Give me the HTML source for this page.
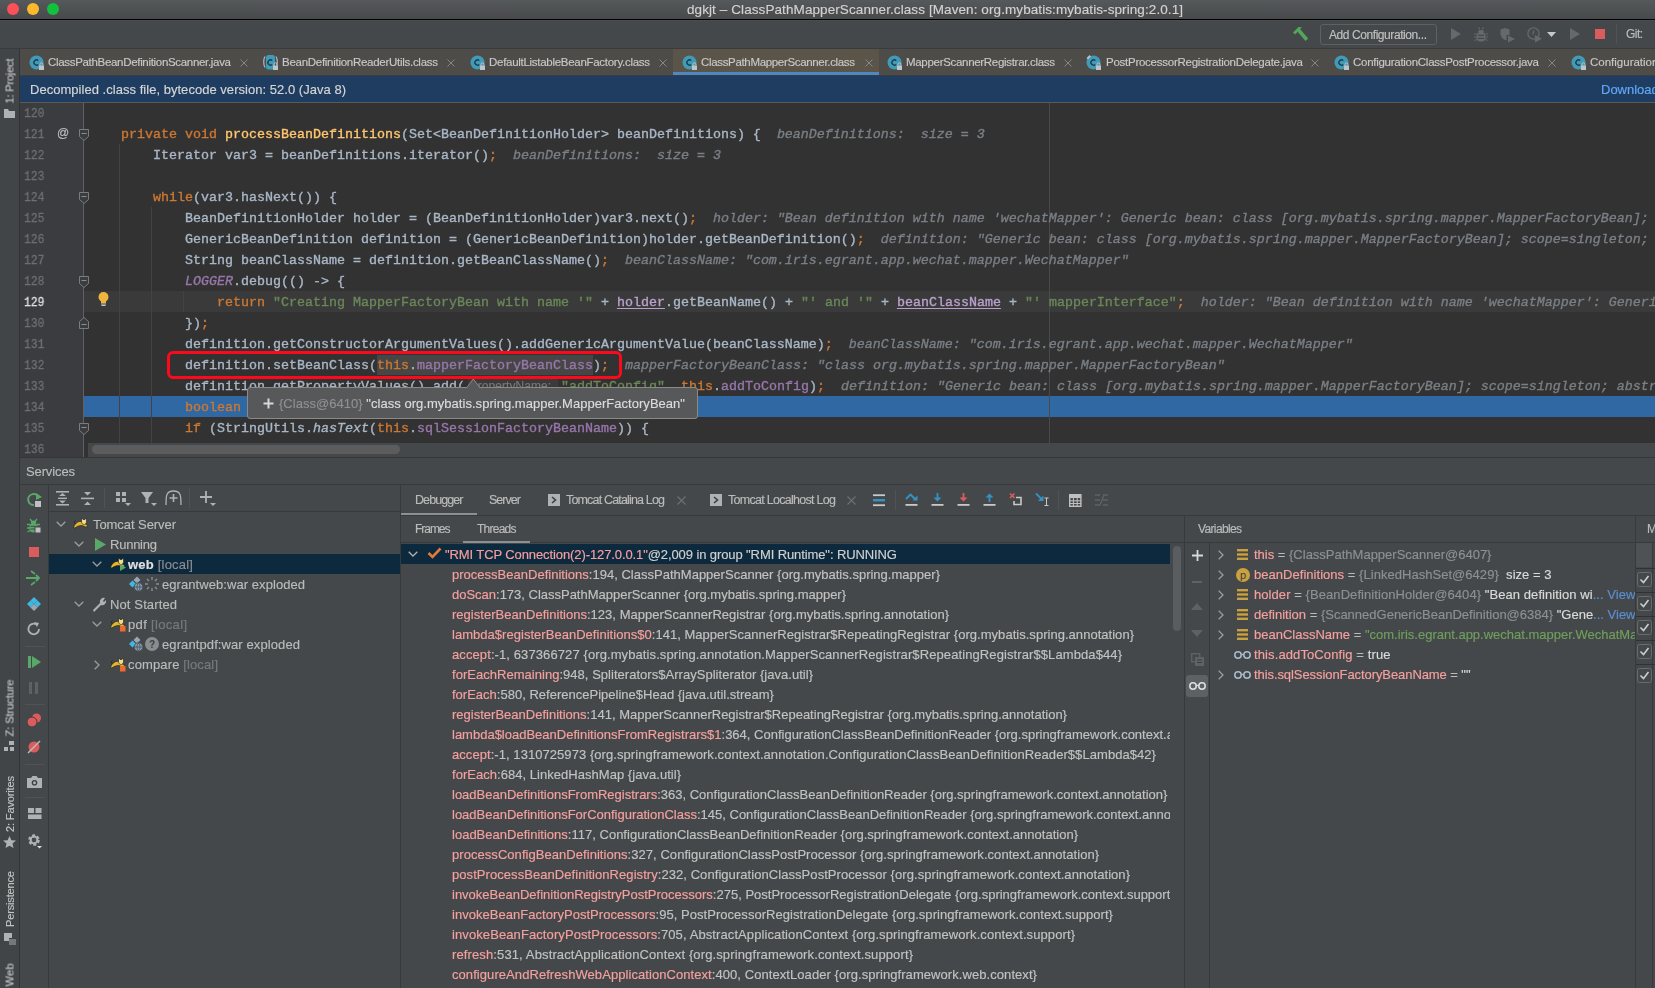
<!DOCTYPE html>
<html><head><meta charset="utf-8"><title>IntelliJ</title>
<style>
html,body{margin:0;padding:0;}
body{width:1655px;height:988px;overflow:hidden;position:relative;background:#45484a;font-family:'Liberation Sans', sans-serif;-webkit-font-smoothing:antialiased;}
body div{position:absolute;}
body div span{position:static;}
</style></head><body>
<div style="left:0;top:0;width:1655px;height:19px;background:linear-gradient(#56595b,#47494b)"></div>
<div style="left:0px;top:19px;width:1655px;height:1px;background:#000000;"></div>
<svg style="position:absolute;left:7px;top:3px;" width="12" height="12" viewBox="0 0 12 12"><circle cx="6" cy="6" r="6" fill="#fd4f57"/></svg>
<svg style="position:absolute;left:27px;top:3px;" width="12" height="12" viewBox="0 0 12 12"><circle cx="6" cy="6" r="6" fill="#fdb82c"/></svg>
<svg style="position:absolute;left:47px;top:3px;" width="12" height="12" viewBox="0 0 12 12"><circle cx="6" cy="6" r="6" fill="#12c13d"/></svg>
<div style="left:687.00px;top:0.30px;white-space:pre;will-change:transform;font-family:'Liberation Sans', sans-serif;font-size:13.5px;line-height:20px;-webkit-text-stroke-width:0.15px;letter-spacing:0.088px;color:#d2d2d2;font-weight:normal;font-style:normal;">dgkjt – ClassPathMapperScanner.class [Maven: org.mybatis:mybatis-spring:2.0.1]</div>
<div style="left:0px;top:20px;width:1655px;height:28px;background:#45484a;"></div>
<div style="left:0px;top:48px;width:1655px;height:1px;background:#393b3d;"></div>
<div style="left:0px;top:20px;width:1655px;height:1px;background:#4b4e50;"></div>
<svg style="position:absolute;left:1291px;top:26px;" width="18" height="16" viewBox="0 0 18 16"><path d="M2 6.4 L7.6 1.1 L10.9 1.2 L8.1 4.3 L4.2 8.4 Z" fill="#52a65c"/><path d="M6 5 L8.6 2.6 L17.2 12.6 L14.5 15 Z" fill="#52a65c"/></svg>
<div style="left:1320px;top:24px;width:115px;height:19px;border:1px solid #5e6062;border-radius:3px;"></div>
<div style="left:1329.00px;top:24.60px;white-space:pre;will-change:transform;font-family:'Liberation Sans', sans-serif;font-size:12px;line-height:20px;-webkit-text-stroke-width:0.15px;letter-spacing:-0.425px;color:#c0c0c0;font-weight:normal;font-style:normal;">Add Configuration...</div>
<svg style="position:absolute;left:1450px;top:28px;" width="12" height="12" viewBox="0 0 12 12"><path d="M1 0 L11 6 L1 12 Z" fill="#66686a"/></svg>
<svg style="position:absolute;left:1474px;top:27px;" width="14" height="15" viewBox="0 0 14 15"><path d="M4.5 0.5 L6 3 M9.5 0.5 L8 3" stroke="#66686a" stroke-width="1.2"/><ellipse cx="7" cy="4.5" rx="3" ry="2"/><rect x="2.5" y="5" width="9" height="9.5" rx="4" fill="#66686a"/><ellipse cx="7" cy="4.5" rx="3" ry="2" fill="#66686a"/><path d="M0 7 H2.5 M11.5 7 H14 M0 10 H2.5 M11.5 10 H14 M0.5 13.5 L2.5 12.5 M13.5 13.5 L11.5 12.5" stroke="#66686a" stroke-width="1.2"/><path d="M4 8.3 H10 M4 11.3 H10" stroke="#45484a" stroke-width="1.2"/></svg>
<svg style="position:absolute;left:1500px;top:28px;" width="16" height="15" viewBox="0 0 16 15"><path d="M0.5 1.5 L5 0 L9.5 1.5 L9.5 7 L6.5 7 L6.5 12.5 C3 11.5 0.5 9 0.5 5 Z" fill="#66686a"/><path d="M8 7.5 L15 11 L8 14.5 Z" fill="#66686a"/></svg>
<svg style="position:absolute;left:1527px;top:27px;" width="16" height="16" viewBox="0 0 16 16"><circle cx="6.5" cy="6.5" r="5.6" fill="none" stroke="#66686a" stroke-width="1.3"/><path d="M6.8 3.5 L5.8 7.5" stroke="#66686a" stroke-width="1.2"/><path d="M8 8 L15 11.7 L8 15.4 Z" fill="#66686a"/></svg>
<svg style="position:absolute;left:1547px;top:32px;" width="9" height="6" viewBox="0 0 9 6"><path d="M0 0 L9 0 L4.5 5 Z" fill="#c8c8c8"/></svg>
<svg style="position:absolute;left:1570px;top:28px;" width="11" height="12" viewBox="0 0 11 12"><path d="M0 0 L10 6 L0 12 Z" fill="#66686a"/></svg>
<div style="left:1595px;top:29px;width:10px;height:10px;background:#db5c5c;"></div>
<div style="left:1616px;top:24px;width:1px;height:20px;background:#505254;"></div>
<div style="left:1626.00px;top:24.00px;white-space:pre;will-change:transform;font-family:'Liberation Sans', sans-serif;font-size:12px;line-height:20px;-webkit-text-stroke-width:0.15px;letter-spacing:-0.557px;color:#bbbbbb;font-weight:normal;font-style:normal;">Git:</div>
<div style="left:0px;top:49px;width:19px;height:939px;background:#424547;"></div>
<div style="left:19px;top:49px;width:1px;height:939px;background:#323436;"></div>
<div style="left:-13.00px;top:73.50px;width:49.0px;white-space:pre;font-family:'Liberation Sans', sans-serif;font-size:11px;line-height:14px;-webkit-text-stroke-width:0.15px;letter-spacing:-0.163px;color:#c6c6c6;font-weight:normal;font-style:normal;transform:rotate(-90deg);will-change:transform;transform-origin:22.50px 7.0px;">1: Project</div>
<svg style="position:absolute;left:4px;top:108px;" width="12" height="11" viewBox="0 0 12 11"><path d="M0 1 L4 1 L5 3 L11 3 L11 10 L0 10 Z" fill="#afb1b3"/></svg>
<div style="left:-19.00px;top:700.50px;width:61.0px;white-space:pre;font-family:'Liberation Sans', sans-serif;font-size:11px;line-height:14px;-webkit-text-stroke-width:0.15px;letter-spacing:-0.043px;color:#c6c6c6;font-weight:normal;font-style:normal;transform:rotate(-90deg);will-change:transform;transform-origin:28.50px 7.0px;">Z: Structure</div>
<svg style="position:absolute;left:4px;top:741px;" width="11" height="11" viewBox="0 0 11 11"><rect x="5" y="0" width="5" height="4" fill="#afb1b3"/><rect x="0" y="6" width="4" height="4" fill="#afb1b3"/><rect x="6" y="6" width="4" height="4" fill="#afb1b3"/></svg>
<div style="left:-18.50px;top:797.00px;width:60.0px;white-space:pre;font-family:'Liberation Sans', sans-serif;font-size:11px;line-height:14px;-webkit-text-stroke-width:0.15px;letter-spacing:-0.134px;color:#c6c6c6;font-weight:normal;font-style:normal;transform:rotate(-90deg);will-change:transform;transform-origin:28.00px 7.0px;">2: Favorites</div>
<svg style="position:absolute;left:3px;top:836px;" width="13" height="12" viewBox="0 0 13 12"><path d="M6.5 0 L8.4 4.2 L13 4.6 L9.5 7.6 L10.5 12 L6.5 9.7 L2.5 12 L3.5 7.6 L0 4.6 L4.6 4.2 Z" fill="#afb1b3"/></svg>
<div style="left:-18.50px;top:892.00px;width:60.0px;white-space:pre;font-family:'Liberation Sans', sans-serif;font-size:11px;line-height:14px;-webkit-text-stroke-width:0.15px;letter-spacing:-0.148px;color:#c6c6c6;font-weight:normal;font-style:normal;transform:rotate(-90deg);will-change:transform;transform-origin:28.00px 7.0px;">Persistence</div>
<svg style="position:absolute;left:4px;top:933px;" width="12" height="12" viewBox="0 0 12 12"><rect x="0" y="0" width="8" height="8" fill="#afb1b3"/><rect x="5" y="5" width="7" height="7" fill="#3c3f41"/><path d="M6 6 V12 M8 6 V12 M10 6 V12 M12 6 V12" stroke="#afb1b3" stroke-width="1"/></svg>
<div style="left:-2.00px;top:967.50px;width:27.0px;white-space:pre;font-family:'Liberation Sans', sans-serif;font-size:11px;line-height:14px;-webkit-text-stroke-width:0.15px;letter-spacing:0.289px;color:#c6c6c6;font-weight:normal;font-style:normal;transform:rotate(-90deg);will-change:transform;transform-origin:11.50px 7.0px;">Web</div>
<div style="left:20px;top:49px;width:1635px;height:26px;background:#4e4c49;"></div>
<div style="left:673px;top:49px;width:206px;height:26px;background:#5a5548;"></div>
<div style="left:673px;top:72px;width:206px;height:3px;background:#4a88c7;"></div>
<svg style="position:absolute;left:29px;top:55px;" width="17" height="16" viewBox="0 0 17 16"><circle cx="7.5" cy="7.5" r="7" fill="#419bb8"/><path d="M9.3 5.6 A2.6 2.6 0 1 0 9.3 9.4" stroke="#1f3b45" stroke-width="1.3" fill="none"/><rect x="10" y="10.5" width="5" height="4.5" fill="#bfc4c8"/><path d="M11 10.5 V9.3 A1.5 1.5 0 0 1 14 9.3 V10.5" stroke="#bfc4c8" stroke-width="1" fill="none"/></svg>
<div style="left:48.00px;top:52.30px;white-space:pre;will-change:transform;font-family:'Liberation Sans', sans-serif;font-size:11.5px;line-height:20px;-webkit-text-stroke-width:0.15px;letter-spacing:-0.315px;color:#c8c8c8;font-weight:normal;font-style:normal;">ClassPathBeanDefinitionScanner.java</div>
<svg style="position:absolute;left:239.5px;top:58.5px;" width="8" height="8" viewBox="0 0 8 8"><path d="M0.5 0.5 L7.5 7.5 M7.5 0.5 L0.5 7.5" stroke="#8a8d8e" stroke-width="0.9"/></svg>
<svg style="position:absolute;left:263px;top:55px;" width="17" height="16" viewBox="0 0 17 16"><path d="M2 1.5 C0.3 4 0.3 10 2 12.5 M13 1.5 C14.7 4 14.7 10 13 12.5" stroke="#aab4bc" stroke-width="1.3" fill="none"/><rect x="3" y="0" width="9" height="14.5" rx="2.5" fill="#419bb8"/><path d="M9.3 5.6 A2.6 2.6 0 1 0 9.3 9.4" stroke="#1f3b45" stroke-width="1.3" fill="none"/><rect x="10" y="10.5" width="5" height="4.5" fill="#bfc4c8"/><path d="M11 10.5 V9.3 A1.5 1.5 0 0 1 14 9.3 V10.5" stroke="#bfc4c8" stroke-width="1" fill="none"/></svg>
<div style="left:282.00px;top:52.30px;white-space:pre;will-change:transform;font-family:'Liberation Sans', sans-serif;font-size:11.5px;line-height:20px;-webkit-text-stroke-width:0.15px;letter-spacing:-0.276px;color:#c8c8c8;font-weight:normal;font-style:normal;">BeanDefinitionReaderUtils.class</div>
<svg style="position:absolute;left:446.5px;top:58.5px;" width="8" height="8" viewBox="0 0 8 8"><path d="M0.5 0.5 L7.5 7.5 M7.5 0.5 L0.5 7.5" stroke="#8a8d8e" stroke-width="0.9"/></svg>
<svg style="position:absolute;left:470px;top:55px;" width="17" height="16" viewBox="0 0 17 16"><circle cx="7.5" cy="7.5" r="7" fill="#419bb8"/><path d="M9.3 5.6 A2.6 2.6 0 1 0 9.3 9.4" stroke="#1f3b45" stroke-width="1.3" fill="none"/><rect x="10" y="10.5" width="5" height="4.5" fill="#bfc4c8"/><path d="M11 10.5 V9.3 A1.5 1.5 0 0 1 14 9.3 V10.5" stroke="#bfc4c8" stroke-width="1" fill="none"/></svg>
<div style="left:489.00px;top:52.30px;white-space:pre;will-change:transform;font-family:'Liberation Sans', sans-serif;font-size:11.5px;line-height:20px;-webkit-text-stroke-width:0.15px;letter-spacing:-0.285px;color:#c8c8c8;font-weight:normal;font-style:normal;">DefaultListableBeanFactory.class</div>
<svg style="position:absolute;left:658.5px;top:58.5px;" width="8" height="8" viewBox="0 0 8 8"><path d="M0.5 0.5 L7.5 7.5 M7.5 0.5 L0.5 7.5" stroke="#8a8d8e" stroke-width="0.9"/></svg>
<svg style="position:absolute;left:682px;top:55px;" width="17" height="16" viewBox="0 0 17 16"><circle cx="7.5" cy="7.5" r="7" fill="#419bb8"/><path d="M9.3 5.6 A2.6 2.6 0 1 0 9.3 9.4" stroke="#1f3b45" stroke-width="1.3" fill="none"/><rect x="10" y="10.5" width="5" height="4.5" fill="#bfc4c8"/><path d="M11 10.5 V9.3 A1.5 1.5 0 0 1 14 9.3 V10.5" stroke="#bfc4c8" stroke-width="1" fill="none"/></svg>
<div style="left:701.00px;top:52.30px;white-space:pre;will-change:transform;font-family:'Liberation Sans', sans-serif;font-size:11.5px;line-height:20px;-webkit-text-stroke-width:0.15px;letter-spacing:-0.333px;color:#c8c8c8;font-weight:normal;font-style:normal;">ClassPathMapperScanner.class</div>
<svg style="position:absolute;left:864.5px;top:58.5px;" width="8" height="8" viewBox="0 0 8 8"><path d="M0.5 0.5 L7.5 7.5 M7.5 0.5 L0.5 7.5" stroke="#8a8d8e" stroke-width="0.9"/></svg>
<svg style="position:absolute;left:887px;top:55px;" width="17" height="16" viewBox="0 0 17 16"><circle cx="7.5" cy="7.5" r="7" fill="#419bb8"/><path d="M9.3 5.6 A2.6 2.6 0 1 0 9.3 9.4" stroke="#1f3b45" stroke-width="1.3" fill="none"/><rect x="10" y="10.5" width="5" height="4.5" fill="#bfc4c8"/><path d="M11 10.5 V9.3 A1.5 1.5 0 0 1 14 9.3 V10.5" stroke="#bfc4c8" stroke-width="1" fill="none"/></svg>
<div style="left:906.00px;top:52.30px;white-space:pre;will-change:transform;font-family:'Liberation Sans', sans-serif;font-size:11.5px;line-height:20px;-webkit-text-stroke-width:0.15px;letter-spacing:-0.306px;color:#c8c8c8;font-weight:normal;font-style:normal;">MapperScannerRegistrar.class</div>
<svg style="position:absolute;left:1063.5px;top:58.5px;" width="8" height="8" viewBox="0 0 8 8"><path d="M0.5 0.5 L7.5 7.5 M7.5 0.5 L0.5 7.5" stroke="#8a8d8e" stroke-width="0.9"/></svg>
<svg style="position:absolute;left:1085px;top:54px;" width="18" height="17" viewBox="0 0 18 17"><g transform="translate(1 1)"><circle cx="7.5" cy="7.5" r="7" fill="#419bb8"/><path d="M9.3 5.6 A2.6 2.6 0 1 0 9.3 9.4" stroke="#1f3b45" stroke-width="1.3" fill="none"/><rect x="10" y="10.5" width="5" height="4.5" fill="#bfc4c8"/><path d="M11 10.5 V9.3 A1.5 1.5 0 0 1 14 9.3 V10.5" stroke="#bfc4c8" stroke-width="1" fill="none"/></g><path d="M1.5 4 L4.5 1 L6 2.5 L3 5.5 Z" fill="#b8c0c6"/></svg>
<div style="left:1106.00px;top:52.30px;white-space:pre;will-change:transform;font-family:'Liberation Sans', sans-serif;font-size:11.5px;line-height:20px;-webkit-text-stroke-width:0.15px;letter-spacing:-0.256px;color:#c8c8c8;font-weight:normal;font-style:normal;">PostProcessorRegistrationDelegate.java</div>
<svg style="position:absolute;left:1310.5px;top:58.5px;" width="8" height="8" viewBox="0 0 8 8"><path d="M0.5 0.5 L7.5 7.5 M7.5 0.5 L0.5 7.5" stroke="#8a8d8e" stroke-width="0.9"/></svg>
<svg style="position:absolute;left:1334px;top:55px;" width="17" height="16" viewBox="0 0 17 16"><circle cx="7.5" cy="7.5" r="7" fill="#419bb8"/><path d="M9.3 5.6 A2.6 2.6 0 1 0 9.3 9.4" stroke="#1f3b45" stroke-width="1.3" fill="none"/><rect x="10" y="10.5" width="5" height="4.5" fill="#bfc4c8"/><path d="M11 10.5 V9.3 A1.5 1.5 0 0 1 14 9.3 V10.5" stroke="#bfc4c8" stroke-width="1" fill="none"/></svg>
<div style="left:1353.00px;top:52.30px;white-space:pre;will-change:transform;font-family:'Liberation Sans', sans-serif;font-size:11.5px;line-height:20px;-webkit-text-stroke-width:0.15px;letter-spacing:-0.275px;color:#c8c8c8;font-weight:normal;font-style:normal;">ConfigurationClassPostProcessor.java</div>
<svg style="position:absolute;left:1547.5px;top:58.5px;" width="8" height="8" viewBox="0 0 8 8"><path d="M0.5 0.5 L7.5 7.5 M7.5 0.5 L0.5 7.5" stroke="#8a8d8e" stroke-width="0.9"/></svg>
<svg style="position:absolute;left:1571px;top:55px;" width="17" height="16" viewBox="0 0 17 16"><circle cx="7.5" cy="7.5" r="7" fill="#419bb8"/><path d="M9.3 5.6 A2.6 2.6 0 1 0 9.3 9.4" stroke="#1f3b45" stroke-width="1.3" fill="none"/><rect x="10" y="10.5" width="5" height="4.5" fill="#bfc4c8"/><path d="M11 10.5 V9.3 A1.5 1.5 0 0 1 14 9.3 V10.5" stroke="#bfc4c8" stroke-width="1" fill="none"/></svg>
<div style="left:1590.00px;top:52.30px;white-space:pre;will-change:transform;font-family:'Liberation Sans', sans-serif;font-size:11.5px;line-height:20px;-webkit-text-stroke-width:0.15px;color:#c8c8c8;font-weight:normal;font-style:normal;">ConfigurationClassPostProcessor.java</div>
<div style="left:20px;top:75px;width:1635px;height:27px;background:#1f3d60;"></div>
<div style="left:20px;top:102px;width:1635px;height:1px;background:#5b5956;"></div>
<div style="left:20px;top:75px;width:1635px;height:1px;background:#3e3d3b;"></div>
<div style="left:30.00px;top:80.00px;white-space:pre;will-change:transform;font-family:'Liberation Sans', sans-serif;font-size:13px;line-height:20px;-webkit-text-stroke-width:0.15px;letter-spacing:0.031px;color:#d6d6d6;font-weight:normal;font-style:normal;">Decompiled .class file, bytecode version: 52.0 (Java 8)</div>
<div style="left:1601.00px;top:80.00px;white-space:pre;will-change:transform;font-family:'Liberation Sans', sans-serif;font-size:13px;line-height:20px;-webkit-text-stroke-width:0.15px;color:#62a8fa;font-weight:normal;font-style:normal;">Download</div>
<div style="left:20px;top:103px;width:64px;height:355px;background:#3a3c3f;"></div>
<div style="left:84px;top:103px;width:1571px;height:355px;background:#323232;"></div>
<div style="left:84px;top:291px;width:1571px;height:21px;background:#3a3a3a;"></div>
<div style="left:84px;top:396px;width:1571px;height:21px;background:#2f68a2;"></div>
<div style="left:1049px;top:103px;width:1px;height:340px;background:#4a4a4a;"></div>
<div style="left:119px;top:144px;width:1px;height:320px;background:#434343;"></div>
<div style="left:151px;top:207px;width:1px;height:300px;background:#434343;"></div>
<div style="left:183px;top:291px;width:1px;height:21px;background:#434343;"></div>
<div style="left:83px;top:103px;width:1px;height:355px;background:#5f6163;"></div>
<svg style="position:absolute;left:79px;top:129px;" width="10" height="12" viewBox="0 0 10 12"><path d="M0.5 0.5 H9.5 V7.5 L5 11.5 L0.5 7.5 Z" fill="#3a3c3f" stroke="#7a7c7e"/><path d="M2.5 4.5 H7.5" stroke="#8a8c8e"/></svg>
<svg style="position:absolute;left:79px;top:192px;" width="10" height="12" viewBox="0 0 10 12"><path d="M0.5 0.5 H9.5 V7.5 L5 11.5 L0.5 7.5 Z" fill="#3a3c3f" stroke="#7a7c7e"/><path d="M2.5 4.5 H7.5" stroke="#8a8c8e"/></svg>
<svg style="position:absolute;left:79px;top:276px;" width="10" height="12" viewBox="0 0 10 12"><path d="M0.5 0.5 H9.5 V7.5 L5 11.5 L0.5 7.5 Z" fill="#3a3c3f" stroke="#7a7c7e"/><path d="M2.5 4.5 H7.5" stroke="#8a8c8e"/></svg>
<svg style="position:absolute;left:79px;top:423px;" width="10" height="12" viewBox="0 0 10 12"><path d="M0.5 0.5 H9.5 V7.5 L5 11.5 L0.5 7.5 Z" fill="#3a3c3f" stroke="#7a7c7e"/><path d="M2.5 4.5 H7.5" stroke="#8a8c8e"/></svg>
<svg style="position:absolute;left:79px;top:317px;" width="10" height="12" viewBox="0 0 10 12"><path d="M0.5 11.5 H9.5 V4.5 L5 0.5 L0.5 4.5 Z" fill="#3a3c3f" stroke="#7a7c7e"/><path d="M2.5 7.5 H7.5" stroke="#8a8c8e"/></svg>
<div style="left:24px;top:103px;font-family:'Liberation Mono', monospace;font-size:13.333px;line-height:21px;color:#6d7073;transform:scaleX(0.85);transform-origin:0 0;will-change:transform;-webkit-text-stroke-width:0.3px;white-space:pre">120</div>
<div style="left:24px;top:124px;font-family:'Liberation Mono', monospace;font-size:13.333px;line-height:21px;color:#6d7073;transform:scaleX(0.85);transform-origin:0 0;will-change:transform;-webkit-text-stroke-width:0.3px;white-space:pre">121</div>
<div style="left:24px;top:145px;font-family:'Liberation Mono', monospace;font-size:13.333px;line-height:21px;color:#6d7073;transform:scaleX(0.85);transform-origin:0 0;will-change:transform;-webkit-text-stroke-width:0.3px;white-space:pre">122</div>
<div style="left:24px;top:166px;font-family:'Liberation Mono', monospace;font-size:13.333px;line-height:21px;color:#6d7073;transform:scaleX(0.85);transform-origin:0 0;will-change:transform;-webkit-text-stroke-width:0.3px;white-space:pre">123</div>
<div style="left:24px;top:187px;font-family:'Liberation Mono', monospace;font-size:13.333px;line-height:21px;color:#6d7073;transform:scaleX(0.85);transform-origin:0 0;will-change:transform;-webkit-text-stroke-width:0.3px;white-space:pre">124</div>
<div style="left:24px;top:208px;font-family:'Liberation Mono', monospace;font-size:13.333px;line-height:21px;color:#6d7073;transform:scaleX(0.85);transform-origin:0 0;will-change:transform;-webkit-text-stroke-width:0.3px;white-space:pre">125</div>
<div style="left:24px;top:229px;font-family:'Liberation Mono', monospace;font-size:13.333px;line-height:21px;color:#6d7073;transform:scaleX(0.85);transform-origin:0 0;will-change:transform;-webkit-text-stroke-width:0.3px;white-space:pre">126</div>
<div style="left:24px;top:250px;font-family:'Liberation Mono', monospace;font-size:13.333px;line-height:21px;color:#6d7073;transform:scaleX(0.85);transform-origin:0 0;will-change:transform;-webkit-text-stroke-width:0.3px;white-space:pre">127</div>
<div style="left:24px;top:271px;font-family:'Liberation Mono', monospace;font-size:13.333px;line-height:21px;color:#6d7073;transform:scaleX(0.85);transform-origin:0 0;will-change:transform;-webkit-text-stroke-width:0.3px;white-space:pre">128</div>
<div style="left:24px;top:292px;font-family:'Liberation Mono', monospace;font-size:13.333px;line-height:21px;color:#e0e0e0;transform:scaleX(0.85);transform-origin:0 0;will-change:transform;-webkit-text-stroke-width:0.3px;white-space:pre">129</div>
<div style="left:24px;top:313px;font-family:'Liberation Mono', monospace;font-size:13.333px;line-height:21px;color:#6d7073;transform:scaleX(0.85);transform-origin:0 0;will-change:transform;-webkit-text-stroke-width:0.3px;white-space:pre">130</div>
<div style="left:24px;top:334px;font-family:'Liberation Mono', monospace;font-size:13.333px;line-height:21px;color:#6d7073;transform:scaleX(0.85);transform-origin:0 0;will-change:transform;-webkit-text-stroke-width:0.3px;white-space:pre">131</div>
<div style="left:24px;top:355px;font-family:'Liberation Mono', monospace;font-size:13.333px;line-height:21px;color:#6d7073;transform:scaleX(0.85);transform-origin:0 0;will-change:transform;-webkit-text-stroke-width:0.3px;white-space:pre">132</div>
<div style="left:24px;top:376px;font-family:'Liberation Mono', monospace;font-size:13.333px;line-height:21px;color:#6d7073;transform:scaleX(0.85);transform-origin:0 0;will-change:transform;-webkit-text-stroke-width:0.3px;white-space:pre">133</div>
<div style="left:24px;top:397px;font-family:'Liberation Mono', monospace;font-size:13.333px;line-height:21px;color:#6d7073;transform:scaleX(0.85);transform-origin:0 0;will-change:transform;-webkit-text-stroke-width:0.3px;white-space:pre">134</div>
<div style="left:24px;top:418px;font-family:'Liberation Mono', monospace;font-size:13.333px;line-height:21px;color:#6d7073;transform:scaleX(0.85);transform-origin:0 0;will-change:transform;-webkit-text-stroke-width:0.3px;white-space:pre">135</div>
<div style="left:24px;top:439px;font-family:'Liberation Mono', monospace;font-size:13.333px;line-height:21px;color:#6d7073;transform:scaleX(0.85);transform-origin:0 0;will-change:transform;-webkit-text-stroke-width:0.3px;white-space:pre">136</div>
<div style="left:57.00px;top:122.50px;white-space:pre;will-change:transform;font-family:'Liberation Sans', sans-serif;font-size:12px;line-height:21px;-webkit-text-stroke-width:0.15px;color:#c0c0c0;font-weight:normal;font-style:normal;">@</div>
<svg style="position:absolute;left:98px;top:292px;" width="11" height="15" viewBox="0 0 11 15"><circle cx="5.5" cy="5" r="5" fill="#f0b63c"/><rect x="3" y="9" width="5" height="2" fill="#f0b63c"/><rect x="3" y="11.5" width="5" height="1" fill="#c8c8c8"/><rect x="3.5" y="13" width="4" height="1" fill="#c8c8c8"/></svg>
<div style="left:121.00px;top:124.00px;white-space:pre;will-change:transform;font-family:'Liberation Mono', monospace;font-size:13.333px;line-height:21px;-webkit-text-stroke-width:0.35px;"><span style="color:#cc7832;font-weight:normal;font-style:normal;">private void </span><span style="color:#ffc66d;font-weight:normal;font-style:normal;">processBeanDefinitions</span><span style="color:#a9b7c6;font-weight:normal;font-style:normal;">(Set&lt;BeanDefinitionHolder&gt; beanDefinitions) {</span><span style="color:#a9b7c6;font-weight:normal;font-style:normal;">  </span><span style="color:#7a7f85;font-weight:normal;font-style:italic;">beanDefinitions:  size = 3</span></div>
<div style="left:153.00px;top:145.00px;white-space:pre;will-change:transform;font-family:'Liberation Mono', monospace;font-size:13.333px;line-height:21px;-webkit-text-stroke-width:0.35px;"><span style="color:#a9b7c6;font-weight:normal;font-style:normal;">Iterator var3 = beanDefinitions.iterator()</span><span style="color:#cc7832;font-weight:normal;font-style:normal;">;</span><span style="color:#a9b7c6;font-weight:normal;font-style:normal;">  </span><span style="color:#7a7f85;font-weight:normal;font-style:italic;">beanDefinitions:  size = 3</span></div>
<div style="left:153.00px;top:187.00px;white-space:pre;will-change:transform;font-family:'Liberation Mono', monospace;font-size:13.333px;line-height:21px;-webkit-text-stroke-width:0.35px;"><span style="color:#cc7832;font-weight:normal;font-style:normal;">while</span><span style="color:#a9b7c6;font-weight:normal;font-style:normal;">(var3.hasNext()) {</span></div>
<div style="left:185.00px;top:208.00px;white-space:pre;will-change:transform;font-family:'Liberation Mono', monospace;font-size:13.333px;line-height:21px;-webkit-text-stroke-width:0.35px;"><span style="color:#a9b7c6;font-weight:normal;font-style:normal;">BeanDefinitionHolder holder = (BeanDefinitionHolder)var3.next()</span><span style="color:#cc7832;font-weight:normal;font-style:normal;">;</span><span style="color:#a9b7c6;font-weight:normal;font-style:normal;">  </span><span style="color:#7a7f85;font-weight:normal;font-style:italic;">holder: "Bean definition with name 'wechatMapper': Generic bean: class [org.mybatis.spring.mapper.MapperFactoryBean]; scope=singleton</span></div>
<div style="left:185.00px;top:229.00px;white-space:pre;will-change:transform;font-family:'Liberation Mono', monospace;font-size:13.333px;line-height:21px;-webkit-text-stroke-width:0.35px;"><span style="color:#a9b7c6;font-weight:normal;font-style:normal;">GenericBeanDefinition definition = (GenericBeanDefinition)holder.getBeanDefinition()</span><span style="color:#cc7832;font-weight:normal;font-style:normal;">;</span><span style="color:#a9b7c6;font-weight:normal;font-style:normal;">  </span><span style="color:#7a7f85;font-weight:normal;font-style:italic;">definition: "Generic bean: class [org.mybatis.spring.mapper.MapperFactoryBean]; scope=singleton; abstract</span></div>
<div style="left:185.00px;top:250.00px;white-space:pre;will-change:transform;font-family:'Liberation Mono', monospace;font-size:13.333px;line-height:21px;-webkit-text-stroke-width:0.35px;"><span style="color:#a9b7c6;font-weight:normal;font-style:normal;">String beanClassName = definition.getBeanClassName()</span><span style="color:#cc7832;font-weight:normal;font-style:normal;">;</span><span style="color:#a9b7c6;font-weight:normal;font-style:normal;">  </span><span style="color:#7a7f85;font-weight:normal;font-style:italic;">beanClassName: "com.iris.egrant.app.wechat.mapper.WechatMapper"</span></div>
<div style="left:185.00px;top:271.00px;white-space:pre;will-change:transform;font-family:'Liberation Mono', monospace;font-size:13.333px;line-height:21px;-webkit-text-stroke-width:0.35px;"><span style="color:#9876aa;font-weight:normal;font-style:italic;">LOGGER</span><span style="color:#a9b7c6;font-weight:normal;font-style:normal;">.debug(() -&gt; {</span></div>
<div style="left:217.00px;top:292.00px;white-space:pre;will-change:transform;font-family:'Liberation Mono', monospace;font-size:13.333px;line-height:21px;-webkit-text-stroke-width:0.35px;"><span style="color:#cc7832;font-weight:normal;font-style:normal;">return </span><span style="color:#6a8759;font-weight:normal;font-style:normal;">"Creating MapperFactoryBean with name '"</span><span style="color:#a9b7c6;font-weight:normal;font-style:normal;"> + </span><span style="color:#b8a0cc;font-weight:normal;font-style:normal;text-decoration:underline;text-underline-offset:2px">holder</span><span style="color:#a9b7c6;font-weight:normal;font-style:normal;">.getBeanName() + </span><span style="color:#6a8759;font-weight:normal;font-style:normal;">"' and '"</span><span style="color:#a9b7c6;font-weight:normal;font-style:normal;"> + </span><span style="color:#b8a0cc;font-weight:normal;font-style:normal;text-decoration:underline;text-underline-offset:2px">beanClassName</span><span style="color:#a9b7c6;font-weight:normal;font-style:normal;"> + </span><span style="color:#6a8759;font-weight:normal;font-style:normal;">"' mapperInterface"</span><span style="color:#cc7832;font-weight:normal;font-style:normal;">;</span><span style="color:#a9b7c6;font-weight:normal;font-style:normal;">  </span><span style="color:#7a7f85;font-weight:normal;font-style:italic;">holder: "Bean definition with name 'wechatMapper': Generic</span></div>
<div style="left:185.00px;top:313.00px;white-space:pre;will-change:transform;font-family:'Liberation Mono', monospace;font-size:13.333px;line-height:21px;-webkit-text-stroke-width:0.35px;"><span style="color:#a9b7c6;font-weight:normal;font-style:normal;">})</span><span style="color:#cc7832;font-weight:normal;font-style:normal;">;</span></div>
<div style="left:185.00px;top:334.00px;white-space:pre;will-change:transform;font-family:'Liberation Mono', monospace;font-size:13.333px;line-height:21px;-webkit-text-stroke-width:0.35px;"><span style="color:#a9b7c6;font-weight:normal;font-style:normal;">definition.getConstructorArgumentValues().addGenericArgumentValue(beanClassName)</span><span style="color:#cc7832;font-weight:normal;font-style:normal;">;</span><span style="color:#a9b7c6;font-weight:normal;font-style:normal;">  </span><span style="color:#7a7f85;font-weight:normal;font-style:italic;">beanClassName: "com.iris.egrant.app.wechat.mapper.WechatMapper"</span></div>
<div style="left:377px;top:355px;width:216px;height:20px;background:#464646;"></div>
<div style="left:185.00px;top:355.00px;white-space:pre;will-change:transform;font-family:'Liberation Mono', monospace;font-size:13.333px;line-height:21px;-webkit-text-stroke-width:0.35px;"><span style="color:#a9b7c6;font-weight:normal;font-style:normal;">definition.setBeanClass(</span><span style="color:#cc7832;font-weight:normal;font-style:normal;">this</span><span style="color:#a9b7c6;font-weight:normal;font-style:normal;">.</span><span style="color:#9876aa;font-weight:normal;font-style:normal;">mapperFactoryBeanClass</span><span style="color:#a9b7c6;font-weight:normal;font-style:normal;">)</span><span style="color:#cc7832;font-weight:normal;font-style:normal;">;</span><span style="color:#a9b7c6;font-weight:normal;font-style:normal;">  </span><span style="color:#7a7f85;font-weight:normal;font-style:italic;">mapperFactoryBeanClass: "class org.mybatis.spring.mapper.MapperFactoryBean"</span></div>
<div style="left:185.00px;top:376.00px;white-space:pre;will-change:transform;font-family:'Liberation Mono', monospace;font-size:13.333px;line-height:21px;-webkit-text-stroke-width:0.35px;"><span style="color:#a9b7c6;font-weight:normal;font-style:normal;">definition.getPropertyValues().add(</span></div>
<div style="left:468px;top:377px;width:90px;height:17px;background:#3b3b3b;border-radius:3px"></div>
<div style="left:471.00px;top:375.50px;white-space:pre;will-change:transform;font-family:'Liberation Sans', sans-serif;font-size:12px;line-height:20px;-webkit-text-stroke-width:0.15px;letter-spacing:0.052px;color:#787878;font-weight:normal;font-style:normal;">propertyName:</div>
<div style="left:561.00px;top:376.00px;white-space:pre;will-change:transform;font-family:'Liberation Mono', monospace;font-size:13.333px;line-height:21px;-webkit-text-stroke-width:0.35px;"><span style="color:#6a8759;font-weight:normal;font-style:normal;">"addToConfig"</span><span style="color:#cc7832;font-weight:normal;font-style:normal;">, </span><span style="color:#cc7832;font-weight:normal;font-style:normal;">this</span><span style="color:#a9b7c6;font-weight:normal;font-style:normal;">.</span><span style="color:#9876aa;font-weight:normal;font-style:normal;">addToConfig</span><span style="color:#a9b7c6;font-weight:normal;font-style:normal;">)</span><span style="color:#cc7832;font-weight:normal;font-style:normal;">;</span><span style="color:#a9b7c6;font-weight:normal;font-style:normal;">  </span><span style="color:#7a7f85;font-weight:normal;font-style:italic;">definition: "Generic bean: class [org.mybatis.spring.mapper.MapperFactoryBean]; scope=singleton; abstract</span></div>
<div style="left:185.00px;top:397.00px;white-space:pre;will-change:transform;font-family:'Liberation Mono', monospace;font-size:13.333px;line-height:21px;-webkit-text-stroke-width:0.35px;"><span style="color:#cc7832;font-weight:normal;font-style:normal;">boolean </span></div>
<div style="left:185.00px;top:418.00px;white-space:pre;will-change:transform;font-family:'Liberation Mono', monospace;font-size:13.333px;line-height:21px;-webkit-text-stroke-width:0.35px;"><span style="color:#cc7832;font-weight:normal;font-style:normal;">if </span><span style="color:#a9b7c6;font-weight:normal;font-style:normal;">(StringUtils.</span><span style="color:#a9b7c6;font-weight:normal;font-style:italic;">hasText</span><span style="color:#a9b7c6;font-weight:normal;font-style:normal;">(</span><span style="color:#cc7832;font-weight:normal;font-style:normal;">this</span><span style="color:#a9b7c6;font-weight:normal;font-style:normal;">.</span><span style="color:#9876aa;font-weight:normal;font-style:normal;">sqlSessionFactoryBeanName</span><span style="color:#a9b7c6;font-weight:normal;font-style:normal;">)) {</span></div>
<div style="left:185.00px;top:439.00px;white-space:pre;will-change:transform;font-family:'Liberation Mono', monospace;font-size:13.333px;line-height:21px;-webkit-text-stroke-width:0.35px;"><span style="color:#a9b7c6;font-weight:normal;font-style:normal;">definition.getPropertyValues().add(</span></div>
<div style="left:167px;top:351px;width:449px;height:22px;border:3px solid #fc0a1c;border-radius:6px"></div>
<div style="left:88px;top:443px;width:1567px;height:14px;background:#45484a;"></div>
<div style="left:92px;top:445px;width:308px;height:9px;background:#5a5c5e;border-radius:5px"></div>
<div style="left:247px;top:387px;width:449px;height:30px;background:#575859;border:1px solid #8d8a85;border-radius:3px"></div>
<svg style="position:absolute;left:465px;top:378px;" width="17" height="11" viewBox="0 0 17 11"><path d="M0.5 10 L1.5 10 L8.3 1 L15.2 10 L16.5 10" fill="#575859" stroke="#8d8a85" stroke-width="1"/><rect x="1" y="10" width="15" height="1" fill="#575859"/></svg>
<svg style="position:absolute;left:262.5px;top:397.5px;" width="11" height="11" viewBox="0 0 11 11"><path d="M5.5 0.5 V10.5 M0.5 5.5 H10.5" stroke="#d8d8d8" stroke-width="2"/></svg>
<div style="left:279.00px;top:393.50px;white-space:pre;will-change:transform;font-family:'Liberation Sans', sans-serif;font-size:13px;line-height:20px;-webkit-text-stroke-width:0.15px;letter-spacing:0.032px;"><span style="color:#8e9092;font-weight:normal;font-style:normal;">{Class@6410}</span><span style="color:#dcdcdc;font-weight:normal;font-style:normal;"> "class org.mybatis.spring.mapper.MapperFactoryBean"</span></div>
<div style="left:20px;top:457px;width:1635px;height:1px;background:#363636;"></div>
<div style="left:20px;top:458px;width:1635px;height:26px;background:#45484a;"></div>
<div style="left:26.00px;top:461.50px;white-space:pre;will-change:transform;font-family:'Liberation Sans', sans-serif;font-size:13px;line-height:20px;-webkit-text-stroke-width:0.15px;letter-spacing:-0.123px;color:#bbbbbb;font-weight:normal;font-style:normal;">Services</div>
<div style="left:20px;top:484px;width:1635px;height:1px;background:#37393b;"></div>
<div style="left:20px;top:485px;width:1635px;height:503px;background:#45484a;"></div>
<div style="left:48px;top:485px;width:1px;height:503px;background:#37393b;"></div>
<div style="left:400px;top:485px;width:1px;height:503px;background:#37393b;"></div>
<div style="left:49px;top:511px;width:351px;height:1px;background:#37393b;"></div>
<div style="left:104px;top:488px;width:1px;height:20px;background:#505254;"></div>
<div style="left:189px;top:488px;width:1px;height:20px;background:#505254;"></div>
<svg style="position:absolute;left:56px;top:491px;" width="13" height="15" viewBox="0 0 13 15"><rect x="0" y="0" width="13" height="1.6" fill="#afb1b3"/><rect x="0" y="13" width="13" height="1.6" fill="#afb1b3"/><path d="M3 5 L6.5 2 L10 5 Z M3 9.5 L6.5 12.5 L10 9.5 Z" fill="#afb1b3"/><rect x="2" y="6.6" width="9" height="1.4" fill="#afb1b3"/></svg>
<svg style="position:absolute;left:81px;top:491px;" width="13" height="15" viewBox="0 0 13 15"><rect x="0" y="6.6" width="13" height="1.6" fill="#afb1b3"/><path d="M3 1 L6.5 4.5 L10 1 Z M3 14 L6.5 10.5 L10 14 Z" fill="#afb1b3"/></svg>
<svg style="position:absolute;left:116px;top:492px;" width="15" height="15" viewBox="0 0 15 15"><rect x="0" y="0" width="4" height="4" fill="#afb1b3"/><rect x="6" y="0" width="4" height="4" fill="#afb1b3"/><rect x="0" y="6" width="4" height="4" fill="#afb1b3"/><rect x="6" y="6" width="4" height="4" fill="#afb1b3"/><path d="M9 11 L15 11 L12 14 Z" fill="#afb1b3"/></svg>
<svg style="position:absolute;left:141px;top:491px;" width="16" height="16" viewBox="0 0 16 16"><path d="M0 1 L12 1 L7.5 7 L7.5 12 L4.5 12 L4.5 7 Z" fill="#afb1b3"/><path d="M10 12 L16 12 L13 15 Z" fill="#afb1b3"/></svg>
<svg style="position:absolute;left:165px;top:490px;" width="17" height="16" viewBox="0 0 17 16"><path d="M1 15 C1 6 1 1 8.5 1 C16 1 16 6 16 15" stroke="#afb1b3" stroke-width="1.3" fill="none"/><path d="M8.5 4 V12 M4.5 8 H12.5" stroke="#afb1b3" stroke-width="1.6"/></svg>
<svg style="position:absolute;left:200px;top:491px;" width="16" height="16" viewBox="0 0 16 16"><path d="M6 0 V12 M0 6 H12" stroke="#afb1b3" stroke-width="1.8"/><path d="M10 12 L16 12 L13 15 Z" fill="#afb1b3"/></svg>
<div style="left:49px;top:554px;width:351px;height:20px;background:#0d293e;"></div>
<svg style="position:absolute;left:56px;top:521px;" width="10" height="6" viewBox="0 0 10 6"><path d="M0.7 0.7 L5 5 L9.3 0.7" stroke="#9a9c9e" stroke-width="1.3" fill="none"/></svg>
<svg style="position:absolute;left:73px;top:516px;" width="16" height="16" viewBox="0 0 16 16"><path d="M2.5 4.5 C0.8 5.5 1 7.5 2.8 8" stroke="#1e1e1e" stroke-width="0.8" fill="none"/><path d="M0.8 10.8 C2.5 6.5 5.5 5 9 5.5 L14.5 9.5 L13.2 11.2 L9 9.5 C6.5 9.3 4 10.3 1.5 12.3 Z" fill="#e5b52c" stroke="#1e1e1e" stroke-width="0.6"/><path d="M8.5 2 L10 3.5 L12 3.5 L13.5 2 L13.5 6 C13.5 7.5 12 8.5 11 8.5 C10 8.5 8.5 7.5 8.5 6 Z" fill="#efdc8c" stroke="#1e1e1e" stroke-width="0.6"/></svg>
<div style="left:93.00px;top:514.50px;white-space:pre;will-change:transform;font-family:'Liberation Sans', sans-serif;font-size:13px;line-height:20px;-webkit-text-stroke-width:0.15px;letter-spacing:-0.068px;color:#bbbbbb;font-weight:normal;font-style:normal;">Tomcat Server</div>
<svg style="position:absolute;left:74px;top:541px;" width="10" height="6" viewBox="0 0 10 6"><path d="M0.7 0.7 L5 5 L9.3 0.7" stroke="#9a9c9e" stroke-width="1.3" fill="none"/></svg>
<svg style="position:absolute;left:95px;top:538px;" width="11" height="13" viewBox="0 0 11 13"><path d="M0 0 L11 6.5 L0 13 Z" fill="#59a869"/></svg>
<div style="left:110.00px;top:534.50px;white-space:pre;will-change:transform;font-family:'Liberation Sans', sans-serif;font-size:13px;line-height:20px;-webkit-text-stroke-width:0.15px;letter-spacing:-0.240px;color:#bbbbbb;font-weight:normal;font-style:normal;">Running</div>
<svg style="position:absolute;left:92px;top:561px;" width="10" height="6" viewBox="0 0 10 6"><path d="M0.7 0.7 L5 5 L9.3 0.7" stroke="#9a9c9e" stroke-width="1.3" fill="none"/></svg>
<svg style="position:absolute;left:110px;top:556px;" width="16" height="16" viewBox="0 0 16 16"><path d="M2.5 4.5 C0.8 5.5 1 7.5 2.8 8" stroke="#1e1e1e" stroke-width="0.8" fill="none"/><path d="M0.8 10.8 C2.5 6.5 5.5 5 9 5.5 L14.5 9.5 L13.2 11.2 L9 9.5 C6.5 9.3 4 10.3 1.5 12.3 Z" fill="#e5b52c" stroke="#1e1e1e" stroke-width="0.6"/><path d="M8.5 2 L10 3.5 L12 3.5 L13.5 2 L13.5 6 C13.5 7.5 12 8.5 11 8.5 C10 8.5 8.5 7.5 8.5 6 Z" fill="#efdc8c" stroke="#1e1e1e" stroke-width="0.6"/><path d="M10 8 L16 11.5 L10 15 Z" fill="#59a869"/></svg>
<div style="left:128.00px;top:554.50px;white-space:pre;will-change:transform;font-family:'Liberation Sans', sans-serif;font-size:13px;line-height:20px;-webkit-text-stroke-width:0.15px;letter-spacing:0.211px;"><span style="color:#e0e0e0;font-weight:bold;font-style:normal;">web</span><span style="color:#bbb;font-weight:normal;font-style:normal;"> </span><span style="color:#8c8e90;font-weight:normal;font-style:normal;">[local]</span></div>
<svg style="position:absolute;left:128px;top:576px;" width="16" height="16" viewBox="0 0 16 16"><path d="M4.5 4.5 L8 8 L4.5 11.5 L1 8 Z" fill="#40b6e0"/><path d="M9 0.5 L12.5 4 L9 7.5 L5.5 4 Z" fill="#9aa7b0"/><circle cx="10.5" cy="11" r="4.3" fill="#7f9fb5" stroke="#45484a" stroke-width="0.8"/><path d="M7 11 H14 M10.5 7 C8.5 9 8.5 13 10.5 15 M10.5 7 C12.5 9 12.5 13 10.5 15" stroke="#45484a" stroke-width="0.7" fill="none"/></svg>
<svg style="position:absolute;left:145px;top:577px;" width="14" height="14" viewBox="0 0 14 14"><g stroke="#8a8c8e" stroke-width="1.4"><path d="M7 0 V3 M7 11 V14 M0 7 H3 M11 7 H14 M2 2 L4 4 M10 10 L12 12 M12 2 L10 4 M4 10 L2 12"/></g></svg>
<div style="left:162.00px;top:574.50px;white-space:pre;will-change:transform;font-family:'Liberation Sans', sans-serif;font-size:13px;line-height:20px;-webkit-text-stroke-width:0.15px;letter-spacing:0.064px;color:#bbbbbb;font-weight:normal;font-style:normal;">egrantweb:war exploded</div>
<svg style="position:absolute;left:74px;top:601px;" width="10" height="6" viewBox="0 0 10 6"><path d="M0.7 0.7 L5 5 L9.3 0.7" stroke="#9a9c9e" stroke-width="1.3" fill="none"/></svg>
<svg style="position:absolute;left:92px;top:597px;" width="15" height="15" viewBox="0 0 15 15"><path d="M1 13 L8 6 A4 4 0 0 1 13 1 L11 4 L12 5 L14 3 A4 4 0 0 1 9 8 L2 15 Z" fill="#afb1b3"/></svg>
<div style="left:110.00px;top:594.50px;white-space:pre;will-change:transform;font-family:'Liberation Sans', sans-serif;font-size:13px;line-height:20px;-webkit-text-stroke-width:0.15px;letter-spacing:0.123px;color:#bbbbbb;font-weight:normal;font-style:normal;">Not Started</div>
<svg style="position:absolute;left:92px;top:621px;" width="10" height="6" viewBox="0 0 10 6"><path d="M0.7 0.7 L5 5 L9.3 0.7" stroke="#9a9c9e" stroke-width="1.3" fill="none"/></svg>
<svg style="position:absolute;left:110px;top:616px;" width="16" height="16" viewBox="0 0 16 16"><path d="M2.5 4.5 C0.8 5.5 1 7.5 2.8 8" stroke="#1e1e1e" stroke-width="0.8" fill="none"/><path d="M0.8 10.8 C2.5 6.5 5.5 5 9 5.5 L14.5 9.5 L13.2 11.2 L9 9.5 C6.5 9.3 4 10.3 1.5 12.3 Z" fill="#e5b52c" stroke="#1e1e1e" stroke-width="0.6"/><path d="M8.5 2 L10 3.5 L12 3.5 L13.5 2 L13.5 6 C13.5 7.5 12 8.5 11 8.5 C10 8.5 8.5 7.5 8.5 6 Z" fill="#efdc8c" stroke="#1e1e1e" stroke-width="0.6"/><rect x="10" y="10" width="5.5" height="5.5" fill="#ef6a2e"/></svg>
<div style="left:128.00px;top:614.50px;white-space:pre;will-change:transform;font-family:'Liberation Sans', sans-serif;font-size:13px;line-height:20px;-webkit-text-stroke-width:0.15px;letter-spacing:0.333px;"><span style="color:#bbbbbb;font-weight:normal;font-style:normal;">pdf</span><span style="color:#bbb;font-weight:normal;font-style:normal;"> </span><span style="color:#787a7c;font-weight:normal;font-style:normal;">[local]</span></div>
<svg style="position:absolute;left:128px;top:636px;" width="16" height="16" viewBox="0 0 16 16"><path d="M4.5 4.5 L8 8 L4.5 11.5 L1 8 Z" fill="#40b6e0"/><path d="M9 0.5 L12.5 4 L9 7.5 L5.5 4 Z" fill="#9aa7b0"/><circle cx="10.5" cy="11" r="4.3" fill="#7f9fb5" stroke="#45484a" stroke-width="0.8"/><path d="M7 11 H14 M10.5 7 C8.5 9 8.5 13 10.5 15 M10.5 7 C12.5 9 12.5 13 10.5 15" stroke="#45484a" stroke-width="0.7" fill="none"/></svg>
<svg style="position:absolute;left:145px;top:637px;" width="14" height="14" viewBox="0 0 14 14"><circle cx="7" cy="7" r="7" fill="#8a8c8e"/><text x="7" y="11" font-size="10" font-family="Liberation Sans" text-anchor="middle" fill="#3c3f41" font-weight="bold">?</text></svg>
<div style="left:162.00px;top:634.50px;white-space:pre;will-change:transform;font-family:'Liberation Sans', sans-serif;font-size:13px;line-height:20px;-webkit-text-stroke-width:0.15px;letter-spacing:0.101px;color:#bbbbbb;font-weight:normal;font-style:normal;">egrantpdf:war exploded</div>
<svg style="position:absolute;left:94px;top:660px;" width="6" height="10" viewBox="0 0 6 10"><path d="M0.7 0.7 L5 5 L0.7 9.3" stroke="#9a9c9e" stroke-width="1.3" fill="none"/></svg>
<svg style="position:absolute;left:110px;top:656px;" width="16" height="16" viewBox="0 0 16 16"><path d="M2.5 4.5 C0.8 5.5 1 7.5 2.8 8" stroke="#1e1e1e" stroke-width="0.8" fill="none"/><path d="M0.8 10.8 C2.5 6.5 5.5 5 9 5.5 L14.5 9.5 L13.2 11.2 L9 9.5 C6.5 9.3 4 10.3 1.5 12.3 Z" fill="#e5b52c" stroke="#1e1e1e" stroke-width="0.6"/><path d="M8.5 2 L10 3.5 L12 3.5 L13.5 2 L13.5 6 C13.5 7.5 12 8.5 11 8.5 C10 8.5 8.5 7.5 8.5 6 Z" fill="#efdc8c" stroke="#1e1e1e" stroke-width="0.6"/><rect x="10" y="10" width="5.5" height="5.5" fill="#ef6a2e"/></svg>
<div style="left:128.00px;top:654.50px;white-space:pre;will-change:transform;font-family:'Liberation Sans', sans-serif;font-size:13px;line-height:20px;-webkit-text-stroke-width:0.15px;letter-spacing:0.131px;"><span style="color:#bbbbbb;font-weight:normal;font-style:normal;">compare</span><span style="color:#bbb;font-weight:normal;font-style:normal;"> </span><span style="color:#787a7c;font-weight:normal;font-style:normal;">[local]</span></div>
<svg style="position:absolute;left:27px;top:492px;" width="15" height="16" viewBox="0 0 15 16"><path d="M12 6 A5.5 5.5 0 1 0 7 13" stroke="#59a869" stroke-width="2" fill="none"/><path d="M9 1 L15 5 L9 8 Z" fill="#59a869"/><rect x="8" y="9" width="6" height="6" fill="#c0c0c0"/></svg>
<svg style="position:absolute;left:27px;top:518px;" width="15" height="16" viewBox="0 0 15 16"><path d="M3 1 L5 3.5 M10 1 L8 3.5 M0 6.5 H3 M10 6.5 H13 M0 10 H3 M10 10 H13 M0.5 14 L3 12.5 M12.5 14 L10 12.5" stroke="#59a869" stroke-width="1.3"/><ellipse cx="6.5" cy="4.2" rx="2.8" ry="1.8" fill="#59a869"/><rect x="2.5" y="5" width="8" height="9.5" rx="4" fill="#59a869"/><path d="M3.5 8.3 H9.5 M3.5 11 H9.5" stroke="#45484a" stroke-width="1"/><rect x="8" y="9" width="6" height="6" fill="#c0c0c0" stroke="#45484a" stroke-width="1"/></svg>
<div style="left:25px;top:646px;width:20px;height:1px;background:#505254;"></div>
<div style="left:29px;top:547px;width:10px;height:10px;background:#db5c5c;"></div>
<svg style="position:absolute;left:26px;top:570px;" width="16" height="16" viewBox="0 0 16 16"><path d="M0 8 H13 M10 5 L13 8 L10 11" stroke="#59a869" stroke-width="1.8" fill="none"/><path d="M5 1 L9 4 M5 15 L9 12" stroke="#59a869" stroke-width="1.6"/></svg>
<svg style="position:absolute;left:27px;top:597px;" width="14" height="14" viewBox="0 0 14 14"><path d="M7 0 L10.5 3.5 L7 7 L3.5 3.5 Z" fill="#40b6e0"/><path d="M3.5 3.5 L7 7 L3.5 10.5 L0 7 Z" fill="#40b6e0"/><path d="M10.5 3.5 L14 7 L10.5 10.5 L7 7 Z" fill="#40b6e0"/><path d="M7 7 L10.5 10.5 L7 14 L3.5 10.5 Z" fill="#9aa7b0"/></svg>
<svg style="position:absolute;left:27px;top:622px;" width="14" height="14" viewBox="0 0 14 14"><path d="M12 7 A5.3 5.3 0 1 1 9 2.2" stroke="#afb1b3" stroke-width="1.8" fill="none"/><path d="M7 0 L12 1 L10 5 Z" fill="#afb1b3"/></svg>
<svg style="position:absolute;left:28px;top:655px;" width="13" height="14" viewBox="0 0 13 14"><rect x="0" y="1" width="3" height="12" fill="#59a869"/><path d="M4 1 L13 7 L4 13 Z" fill="#59a869"/></svg>
<svg style="position:absolute;left:29px;top:682px;" width="10" height="12" viewBox="0 0 10 12"><rect x="0" y="0" width="3" height="12" fill="#5f6264"/><rect x="6" y="0" width="3" height="12" fill="#5f6264"/></svg>
<div style="left:25px;top:704px;width:20px;height:1px;background:#505254;"></div>
<svg style="position:absolute;left:27px;top:713px;" width="15" height="14" viewBox="0 0 15 14"><circle cx="9.5" cy="5" r="4.5" fill="#db5c5c"/><circle cx="5" cy="9" r="5" fill="#db5c5c" stroke="#3c3f41" stroke-width="1"/></svg>
<svg style="position:absolute;left:27px;top:740px;" width="14" height="14" viewBox="0 0 14 14"><circle cx="7" cy="7" r="5.5" fill="#db5c5c"/><path d="M1 13 L13 1" stroke="#bbbbbb" stroke-width="1.5"/></svg>
<div style="left:25px;top:764px;width:20px;height:1px;background:#505254;"></div>
<svg style="position:absolute;left:27px;top:775px;" width="15" height="13" viewBox="0 0 15 13"><path d="M0 3 H4 L5.5 1 H9.5 L11 3 H15 V13 H0 Z" fill="#afb1b3"/><circle cx="7.5" cy="7.8" r="2.8" fill="#3c3f41"/><circle cx="7.5" cy="7.8" r="1.5" fill="#afb1b3"/></svg>
<div style="left:25px;top:797px;width:20px;height:1px;background:#505254;"></div>
<svg style="position:absolute;left:28px;top:808px;" width="14" height="11" viewBox="0 0 14 11"><rect x="0" y="0" width="6" height="5" fill="#afb1b3"/><rect x="7.5" y="0" width="6" height="5" fill="#afb1b3"/><rect x="0" y="6.5" width="13.5" height="4.5" fill="#afb1b3"/></svg>
<svg style="position:absolute;left:27px;top:833px;" width="16" height="16" viewBox="0 0 16 16"><circle cx="7" cy="7" r="4.2" fill="none" stroke="#afb1b3" stroke-width="3.2" stroke-dasharray="2.6 1.8"/><circle cx="7" cy="7" r="3.4" fill="none" stroke="#afb1b3" stroke-width="2"/><path d="M10 13 H15 L12.5 15.5 Z" fill="#dddddd"/></svg>
<div style="left:401px;top:515px;width:1254px;height:1px;background:#37393b;"></div>
<div style="left:401px;top:513px;width:76px;height:2px;background:#8b9095;"></div>
<div style="left:414.50px;top:490.30px;white-space:pre;will-change:transform;font-family:'Liberation Sans', sans-serif;font-size:12.5px;line-height:20px;-webkit-text-stroke-width:0.15px;letter-spacing:-0.915px;color:#bbbbbb;font-weight:normal;font-style:normal;">Debugger</div>
<div style="left:489.00px;top:490.30px;white-space:pre;will-change:transform;font-family:'Liberation Sans', sans-serif;font-size:12.5px;line-height:20px;-webkit-text-stroke-width:0.15px;letter-spacing:-0.966px;color:#bbbbbb;font-weight:normal;font-style:normal;">Server</div>
<svg style="position:absolute;left:548px;top:494px;" width="12" height="12" viewBox="0 0 12 12"><rect x="0" y="0" width="12" height="12" fill="#afb1b3"/><path d="M4 3 L7.5 6 L4 9" stroke="#3c3f41" stroke-width="1.6" fill="none"/></svg>
<div style="left:566.00px;top:490.30px;white-space:pre;will-change:transform;font-family:'Liberation Sans', sans-serif;font-size:12.5px;line-height:20px;-webkit-text-stroke-width:0.15px;letter-spacing:-0.831px;color:#bbbbbb;font-weight:normal;font-style:normal;">Tomcat Catalina Log</div>
<svg style="position:absolute;left:677px;top:496px;" width="9" height="9" viewBox="0 0 9 9"><path d="M0.5 0.5 L8.5 8.5 M8.5 0.5 L0.5 8.5" stroke="#6e7072" stroke-width="1.1"/></svg>
<svg style="position:absolute;left:710px;top:494px;" width="12" height="12" viewBox="0 0 12 12"><rect x="0" y="0" width="12" height="12" fill="#afb1b3"/><path d="M4 3 L7.5 6 L4 9" stroke="#3c3f41" stroke-width="1.6" fill="none"/></svg>
<div style="left:728.00px;top:490.30px;white-space:pre;will-change:transform;font-family:'Liberation Sans', sans-serif;font-size:12.5px;line-height:20px;-webkit-text-stroke-width:0.15px;letter-spacing:-0.716px;color:#bbbbbb;font-weight:normal;font-style:normal;">Tomcat Localhost Log</div>
<svg style="position:absolute;left:847px;top:496px;" width="9" height="9" viewBox="0 0 9 9"><path d="M0.5 0.5 L8.5 8.5 M8.5 0.5 L0.5 8.5" stroke="#6e7072" stroke-width="1.1"/></svg>
<svg style="position:absolute;left:873px;top:494px;" width="13" height="13" viewBox="0 0 13 13"><rect x="0" y="0.3" width="12" height="1.8" fill="#c8c8c8"/><rect x="0" y="5" width="12" height="2.4" fill="#3592c4"/><rect x="0" y="10.3" width="12" height="1.8" fill="#c8c8c8"/></svg>
<div style="left:895px;top:490px;width:1px;height:20px;background:#505254;"></div>
<svg style="position:absolute;left:905px;top:492px;" width="14" height="15" viewBox="0 0 14 15"><path d="M1 7 L5.5 2.5 L10 7" stroke="#3592c4" stroke-width="1.8" fill="none" stroke-linejoin="round"/><path d="M7.5 8.5 L12.5 8.5 L12.5 3.5 Z" fill="#3592c4"/><rect x="0.5" y="12" width="12" height="1.8" fill="#c8c8c8"/></svg>
<svg style="position:absolute;left:931px;top:492px;" width="13" height="15" viewBox="0 0 13 15"><path d="M6.5 1 V7" stroke="#3592c4" stroke-width="1.8"/><path d="M2.5 5.5 L6.5 9.5 L10.5 5.5 Z" fill="#3592c4"/><rect x="0.5" y="12" width="12" height="1.8" fill="#c8c8c8"/></svg>
<svg style="position:absolute;left:957px;top:492px;" width="13" height="15" viewBox="0 0 13 15"><path d="M6.5 1 V7" stroke="#db5c5c" stroke-width="1.8"/><path d="M2.5 5.5 L6.5 9.5 L10.5 5.5 Z" fill="#db5c5c"/><rect x="0.5" y="12" width="12" height="1.8" fill="#c8c8c8"/></svg>
<svg style="position:absolute;left:983px;top:492px;" width="13" height="15" viewBox="0 0 13 15"><path d="M6.5 4 V10" stroke="#3592c4" stroke-width="1.8"/><path d="M2.5 5.5 L6.5 1.5 L10.5 5.5 Z" fill="#3592c4"/><rect x="0.5" y="12" width="12" height="1.8" fill="#c8c8c8"/></svg>
<svg style="position:absolute;left:1009px;top:492px;" width="14" height="15" viewBox="0 0 14 15"><path d="M1 1.5 L5.5 6 M5.5 1.5 L1 6" stroke="#db5c5c" stroke-width="1.6"/><path d="M7 5.5 H12 V12.5 H5 V9" stroke="#c8c8c8" stroke-width="1.6" fill="none"/></svg>
<svg style="position:absolute;left:1035px;top:492px;" width="16" height="15" viewBox="0 0 16 15"><path d="M1 1.5 L6.5 7" stroke="#3592c4" stroke-width="1.8"/><path d="M8.5 3.5 L8.5 9 L3 9 Z" fill="#3592c4"/><path d="M9.5 6 H13.5 M11.5 6 V13.5 M9.5 13.5 H13.5" stroke="#c8c8c8" stroke-width="1"/></svg>
<div style="left:1058px;top:490px;width:1px;height:20px;background:#505254;"></div>
<svg style="position:absolute;left:1069px;top:494px;" width="13" height="13" viewBox="0 0 13 13"><rect x="0.7" y="0.7" width="11.2" height="11.6" fill="none" stroke="#c0c0c0" stroke-width="1.4"/><rect x="0.7" y="0.7" width="11.2" height="3.3" fill="#c0c0c0"/><path d="M4.4 4 V12 M8.2 4 V12 M1 6.8 H12 M1 9.5 H12" stroke="#c0c0c0" stroke-width="1"/></svg>
<svg style="position:absolute;left:1095px;top:494px;" width="13" height="12" viewBox="0 0 13 12"><path d="M0 1 H5 M0 6 H5 M0 11 H5 M8 1 H13 M8 6 H13 M8 11 H13 M5 11 L9 1" stroke="#5f6264" stroke-width="1.4"/></svg>
<div style="left:401px;top:542px;width:783px;height:1px;background:#37393b;"></div>
<div style="left:1184px;top:516px;width:1px;height:472px;background:#37393b;"></div>
<div style="left:463px;top:541px;width:67px;height:2px;background:#8b9095;"></div>
<div style="left:414.50px;top:519.00px;white-space:pre;will-change:transform;font-family:'Liberation Sans', sans-serif;font-size:12px;line-height:20px;-webkit-text-stroke-width:0.15px;letter-spacing:-1.034px;color:#bbbbbb;font-weight:normal;font-style:normal;">Frames</div>
<div style="left:476.50px;top:519.00px;white-space:pre;will-change:transform;font-family:'Liberation Sans', sans-serif;font-size:12px;line-height:20px;-webkit-text-stroke-width:0.15px;letter-spacing:-0.755px;color:#bbbbbb;font-weight:normal;font-style:normal;">Threads</div>
<div style="left:401px;top:544px;width:769px;height:20px;background:#0d293e;"></div>
<svg style="position:absolute;left:408px;top:551px;" width="10" height="6" viewBox="0 0 10 6"><path d="M0.7 0.7 L5 5 L9.3 0.7" stroke="#b0b0b0" stroke-width="1.3" fill="none"/></svg>
<svg style="position:absolute;left:427px;top:547px;" width="15" height="12" viewBox="0 0 15 12"><path d="M1.5 6 L5.5 10 L13.5 1.5" stroke="#e07b3a" stroke-width="2.6" fill="none"/></svg>
<div style="left:444.50px;top:544.50px;white-space:pre;will-change:transform;font-family:'Liberation Sans', sans-serif;font-size:13px;line-height:20px;-webkit-text-stroke-width:0.15px;letter-spacing:-0.099px;"><span style="color:#f5a09e;font-weight:normal;font-style:normal;">"RMI TCP Connection(2)-127.0.0.1"</span><span style="color:#d0d0d0;font-weight:normal;font-style:normal;">@2,009 in group "RMI Runtime": RUNNING</span></div>
<div style="left:1173px;top:546px;width:8px;height:85px;background:#5a5d5f;border-radius:4px"></div>
<div style="left:401px;top:564px;width:769px;height:424px;overflow:hidden">
<div style="left:51.00px;top:0.50px;white-space:pre;will-change:transform;font-family:'Liberation Sans', sans-serif;font-size:13px;line-height:20px;-webkit-text-stroke-width:0.15px;letter-spacing:0.012px;"><span style="color:#f5a09e;font-weight:normal;font-style:normal;">processBeanDefinitions</span><span style="color:#c2c2c2;font-weight:normal;font-style:normal;">:194, ClassPathMapperScanner {org.mybatis.spring.mapper}</span></div>
<div style="left:51.00px;top:20.50px;white-space:pre;will-change:transform;font-family:'Liberation Sans', sans-serif;font-size:13px;line-height:20px;-webkit-text-stroke-width:0.15px;letter-spacing:-0.009px;"><span style="color:#f5a09e;font-weight:normal;font-style:normal;">doScan</span><span style="color:#c2c2c2;font-weight:normal;font-style:normal;">:173, ClassPathMapperScanner {org.mybatis.spring.mapper}</span></div>
<div style="left:51.00px;top:40.50px;white-space:pre;will-change:transform;font-family:'Liberation Sans', sans-serif;font-size:13px;line-height:20px;-webkit-text-stroke-width:0.15px;letter-spacing:0.024px;"><span style="color:#f5a09e;font-weight:normal;font-style:normal;">registerBeanDefinitions</span><span style="color:#c2c2c2;font-weight:normal;font-style:normal;">:123, MapperScannerRegistrar {org.mybatis.spring.annotation}</span></div>
<div style="left:51.00px;top:60.50px;white-space:pre;will-change:transform;font-family:'Liberation Sans', sans-serif;font-size:13px;line-height:20px;-webkit-text-stroke-width:0.15px;letter-spacing:0.031px;"><span style="color:#f5a09e;font-weight:normal;font-style:normal;">lambda$registerBeanDefinitions$0</span><span style="color:#c2c2c2;font-weight:normal;font-style:normal;">:141, MapperScannerRegistrar$RepeatingRegistrar {org.mybatis.spring.annotation}</span></div>
<div style="left:51.00px;top:80.50px;white-space:pre;will-change:transform;font-family:'Liberation Sans', sans-serif;font-size:13px;line-height:20px;-webkit-text-stroke-width:0.15px;letter-spacing:0.098px;"><span style="color:#f5a09e;font-weight:normal;font-style:normal;">accept</span><span style="color:#c2c2c2;font-weight:normal;font-style:normal;">:-1, 637366727 {org.mybatis.spring.annotation.MapperScannerRegistrar$RepeatingRegistrar$$Lambda$44}</span></div>
<div style="left:51.00px;top:100.50px;white-space:pre;will-change:transform;font-family:'Liberation Sans', sans-serif;font-size:13px;line-height:20px;-webkit-text-stroke-width:0.15px;letter-spacing:0.030px;"><span style="color:#f5a09e;font-weight:normal;font-style:normal;">forEachRemaining</span><span style="color:#c2c2c2;font-weight:normal;font-style:normal;">:948, Spliterators$ArraySpliterator {java.util}</span></div>
<div style="left:51.00px;top:120.50px;white-space:pre;will-change:transform;font-family:'Liberation Sans', sans-serif;font-size:13px;line-height:20px;-webkit-text-stroke-width:0.15px;letter-spacing:0.007px;"><span style="color:#f5a09e;font-weight:normal;font-style:normal;">forEach</span><span style="color:#c2c2c2;font-weight:normal;font-style:normal;">:580, ReferencePipeline$Head {java.util.stream}</span></div>
<div style="left:51.00px;top:140.50px;white-space:pre;will-change:transform;font-family:'Liberation Sans', sans-serif;font-size:13px;line-height:20px;-webkit-text-stroke-width:0.15px;letter-spacing:0.007px;"><span style="color:#f5a09e;font-weight:normal;font-style:normal;">registerBeanDefinitions</span><span style="color:#c2c2c2;font-weight:normal;font-style:normal;">:141, MapperScannerRegistrar$RepeatingRegistrar {org.mybatis.spring.annotation}</span></div>
<div style="left:51.00px;top:160.50px;white-space:pre;will-change:transform;font-family:'Liberation Sans', sans-serif;font-size:13px;line-height:20px;-webkit-text-stroke-width:0.15px;"><span style="color:#f5a09e;font-weight:normal;font-style:normal;">lambda$loadBeanDefinitionsFromRegistrars$1</span><span style="color:#c2c2c2;font-weight:normal;font-style:normal;">:364, ConfigurationClassBeanDefinitionReader {org.springframework.context.annotation}</span></div>
<div style="left:51.00px;top:180.50px;white-space:pre;will-change:transform;font-family:'Liberation Sans', sans-serif;font-size:13px;line-height:20px;-webkit-text-stroke-width:0.15px;letter-spacing:0.059px;"><span style="color:#f5a09e;font-weight:normal;font-style:normal;">accept</span><span style="color:#c2c2c2;font-weight:normal;font-style:normal;">:-1, 1310725973 {org.springframework.context.annotation.ConfigurationClassBeanDefinitionReader$$Lambda$42}</span></div>
<div style="left:51.00px;top:200.50px;white-space:pre;will-change:transform;font-family:'Liberation Sans', sans-serif;font-size:13px;line-height:20px;-webkit-text-stroke-width:0.15px;letter-spacing:0.036px;"><span style="color:#f5a09e;font-weight:normal;font-style:normal;">forEach</span><span style="color:#c2c2c2;font-weight:normal;font-style:normal;">:684, LinkedHashMap {java.util}</span></div>
<div style="left:51.00px;top:220.50px;white-space:pre;will-change:transform;font-family:'Liberation Sans', sans-serif;font-size:13px;line-height:20px;-webkit-text-stroke-width:0.15px;"><span style="color:#f5a09e;font-weight:normal;font-style:normal;">loadBeanDefinitionsFromRegistrars</span><span style="color:#c2c2c2;font-weight:normal;font-style:normal;">:363, ConfigurationClassBeanDefinitionReader {org.springframework.context.annotation}</span></div>
<div style="left:51.00px;top:240.50px;white-space:pre;will-change:transform;font-family:'Liberation Sans', sans-serif;font-size:13px;line-height:20px;-webkit-text-stroke-width:0.15px;"><span style="color:#f5a09e;font-weight:normal;font-style:normal;">loadBeanDefinitionsForConfigurationClass</span><span style="color:#c2c2c2;font-weight:normal;font-style:normal;">:145, ConfigurationClassBeanDefinitionReader {org.springframework.context.annotation}</span></div>
<div style="left:51.00px;top:260.50px;white-space:pre;will-change:transform;font-family:'Liberation Sans', sans-serif;font-size:13px;line-height:20px;-webkit-text-stroke-width:0.15px;letter-spacing:0.011px;"><span style="color:#f5a09e;font-weight:normal;font-style:normal;">loadBeanDefinitions</span><span style="color:#c2c2c2;font-weight:normal;font-style:normal;">:117, ConfigurationClassBeanDefinitionReader {org.springframework.context.annotation}</span></div>
<div style="left:51.00px;top:280.50px;white-space:pre;will-change:transform;font-family:'Liberation Sans', sans-serif;font-size:13px;line-height:20px;-webkit-text-stroke-width:0.15px;letter-spacing:0.051px;"><span style="color:#f5a09e;font-weight:normal;font-style:normal;">processConfigBeanDefinitions</span><span style="color:#c2c2c2;font-weight:normal;font-style:normal;">:327, ConfigurationClassPostProcessor {org.springframework.context.annotation}</span></div>
<div style="left:51.00px;top:300.50px;white-space:pre;will-change:transform;font-family:'Liberation Sans', sans-serif;font-size:13px;line-height:20px;-webkit-text-stroke-width:0.15px;letter-spacing:0.061px;"><span style="color:#f5a09e;font-weight:normal;font-style:normal;">postProcessBeanDefinitionRegistry</span><span style="color:#c2c2c2;font-weight:normal;font-style:normal;">:232, ConfigurationClassPostProcessor {org.springframework.context.annotation}</span></div>
<div style="left:51.00px;top:320.50px;white-space:pre;will-change:transform;font-family:'Liberation Sans', sans-serif;font-size:13px;line-height:20px;-webkit-text-stroke-width:0.15px;"><span style="color:#f5a09e;font-weight:normal;font-style:normal;">invokeBeanDefinitionRegistryPostProcessors</span><span style="color:#c2c2c2;font-weight:normal;font-style:normal;">:275, PostProcessorRegistrationDelegate {org.springframework.context.support}</span></div>
<div style="left:51.00px;top:340.50px;white-space:pre;will-change:transform;font-family:'Liberation Sans', sans-serif;font-size:13px;line-height:20px;-webkit-text-stroke-width:0.15px;letter-spacing:0.039px;"><span style="color:#f5a09e;font-weight:normal;font-style:normal;">invokeBeanFactoryPostProcessors</span><span style="color:#c2c2c2;font-weight:normal;font-style:normal;">:95, PostProcessorRegistrationDelegate {org.springframework.context.support}</span></div>
<div style="left:51.00px;top:360.50px;white-space:pre;will-change:transform;font-family:'Liberation Sans', sans-serif;font-size:13px;line-height:20px;-webkit-text-stroke-width:0.15px;letter-spacing:0.095px;"><span style="color:#f5a09e;font-weight:normal;font-style:normal;">invokeBeanFactoryPostProcessors</span><span style="color:#c2c2c2;font-weight:normal;font-style:normal;">:705, AbstractApplicationContext {org.springframework.context.support}</span></div>
<div style="left:51.00px;top:380.50px;white-space:pre;will-change:transform;font-family:'Liberation Sans', sans-serif;font-size:13px;line-height:20px;-webkit-text-stroke-width:0.15px;letter-spacing:0.123px;"><span style="color:#f5a09e;font-weight:normal;font-style:normal;">refresh</span><span style="color:#c2c2c2;font-weight:normal;font-style:normal;">:531, AbstractApplicationContext {org.springframework.context.support}</span></div>
<div style="left:51.00px;top:400.50px;white-space:pre;will-change:transform;font-family:'Liberation Sans', sans-serif;font-size:13px;line-height:20px;-webkit-text-stroke-width:0.15px;letter-spacing:0.069px;"><span style="color:#f5a09e;font-weight:normal;font-style:normal;">configureAndRefreshWebApplicationContext</span><span style="color:#c2c2c2;font-weight:normal;font-style:normal;">:400, ContextLoader {org.springframework.web.context}</span></div>
</div>
<div style="left:1198.00px;top:519.00px;white-space:pre;will-change:transform;font-family:'Liberation Sans', sans-serif;font-size:12px;line-height:20px;-webkit-text-stroke-width:0.15px;letter-spacing:-0.643px;color:#bbbbbb;font-weight:normal;font-style:normal;">Variables</div>
<div style="left:1185px;top:542px;width:470px;height:1px;background:#37393b;"></div>
<div style="left:1209px;top:543px;width:1px;height:445px;background:#37393b;"></div>
<div style="left:1635px;top:516px;width:1px;height:472px;background:#37393b;"></div>
<div style="left:1647.00px;top:519.00px;white-space:pre;will-change:transform;font-family:'Liberation Sans', sans-serif;font-size:12px;line-height:20px;-webkit-text-stroke-width:0.15px;color:#bbbbbb;font-weight:normal;font-style:normal;">M</div>
<svg style="position:absolute;left:1192px;top:550px;" width="11" height="11" viewBox="0 0 11 11"><path d="M5.5 0 V11 M0 5.5 H11" stroke="#d8d8d8" stroke-width="1.8"/></svg>
<div style="left:1192px;top:581px;width:10px;height:1.6px;background:#5f6264;"></div>
<svg style="position:absolute;left:1191px;top:603px;" width="12" height="7" viewBox="0 0 12 7"><path d="M0 7 L6 0 L12 7 Z" fill="#5f6264"/></svg>
<svg style="position:absolute;left:1191px;top:630px;" width="12" height="7" viewBox="0 0 12 7"><path d="M0 0 L6 7 L12 0 Z" fill="#5f6264"/></svg>
<svg style="position:absolute;left:1191px;top:653px;" width="13" height="13" viewBox="0 0 13 13"><rect x="0.7" y="0.7" width="8" height="8" fill="none" stroke="#5f6264" stroke-width="1.4"/><rect x="4" y="4" width="9" height="9" fill="#5f6264"/><path d="M6 7 H11 M6 9.5 H11" stroke="#3c3f41" stroke-width="1"/></svg>
<div style="left:1186px;top:675px;width:22px;height:22px;background:#5c6164;border-radius:3px"></div>
<svg style="position:absolute;left:1189px;top:682px;" width="17" height="8" viewBox="0 0 17 8"><circle cx="4" cy="4" r="3.2" fill="none" stroke="#e0e0e0" stroke-width="1.5"/><circle cx="13" cy="4" r="3.2" fill="none" stroke="#e0e0e0" stroke-width="1.5"/><path d="M7.2 3.5 H9.8" stroke="#e0e0e0" stroke-width="1.4"/></svg>
<div style="left:1210px;top:543px;width:425px;height:445px;overflow:hidden">
<svg style="position:absolute;left:8px;top:6.5px;" width="6" height="10" viewBox="0 0 6 10"><path d="M0.7 0.7 L5 5 L0.7 9.3" stroke="#9a9c9e" stroke-width="1.3" fill="none"/></svg>
<svg style="position:absolute;left:27px;top:6.0px;" width="11" height="11" viewBox="0 0 11 11"><rect x="0" y="0" width="11" height="2.4" fill="#c9a13e"/><rect x="0" y="4.3" width="11" height="2.4" fill="#c9a13e"/><rect x="0" y="8.6" width="11" height="2.4" fill="#c9a13e"/></svg>
<div style="left:43.50px;top:1.50px;white-space:pre;will-change:transform;font-family:'Liberation Sans', sans-serif;font-size:13px;line-height:20px;-webkit-text-stroke-width:0.15px;letter-spacing:-0.004px;"><span style="color:#f5a09e;font-weight:normal;font-style:normal;">this</span><span style="color:#bbbbbb;font-weight:normal;font-style:normal;"> = </span><span style="color:#8e9092;font-weight:normal;font-style:normal;">{ClassPathMapperScanner@6407}</span></div>
<svg style="position:absolute;left:8px;top:26.5px;" width="6" height="10" viewBox="0 0 6 10"><path d="M0.7 0.7 L5 5 L0.7 9.3" stroke="#9a9c9e" stroke-width="1.3" fill="none"/></svg>
<svg style="position:absolute;left:26px;top:24.5px;" width="14" height="14" viewBox="0 0 14 14"><circle cx="7" cy="7" r="7" fill="#c9a13e"/><text x="7" y="11" font-size="11" font-family="Liberation Sans" text-anchor="middle" fill="#3c3f41">p</text></svg>
<div style="left:43.50px;top:21.50px;white-space:pre;will-change:transform;font-family:'Liberation Sans', sans-serif;font-size:13px;line-height:20px;-webkit-text-stroke-width:0.15px;letter-spacing:0.036px;"><span style="color:#f5a09e;font-weight:normal;font-style:normal;">beanDefinitions</span><span style="color:#bbbbbb;font-weight:normal;font-style:normal;"> = </span><span style="color:#8e9092;font-weight:normal;font-style:normal;">{LinkedHashSet@6429}</span><span style="color:#dadada;font-weight:normal;font-style:normal;">  size = 3</span></div>
<svg style="position:absolute;left:8px;top:46.5px;" width="6" height="10" viewBox="0 0 6 10"><path d="M0.7 0.7 L5 5 L0.7 9.3" stroke="#9a9c9e" stroke-width="1.3" fill="none"/></svg>
<svg style="position:absolute;left:27px;top:46.0px;" width="11" height="11" viewBox="0 0 11 11"><rect x="0" y="0" width="11" height="2.4" fill="#c9a13e"/><rect x="0" y="4.3" width="11" height="2.4" fill="#c9a13e"/><rect x="0" y="8.6" width="11" height="2.4" fill="#c9a13e"/></svg>
<div style="left:43.50px;top:41.50px;white-space:pre;will-change:transform;font-family:'Liberation Sans', sans-serif;font-size:13px;line-height:20px;-webkit-text-stroke-width:0.15px;letter-spacing:0.069px;"><span style="color:#f5a09e;font-weight:normal;font-style:normal;">holder</span><span style="color:#bbbbbb;font-weight:normal;font-style:normal;"> = </span><span style="color:#8e9092;font-weight:normal;font-style:normal;">{BeanDefinitionHolder@6404}</span><span style="color:#dadada;font-weight:normal;font-style:normal;"> "Bean definition wi</span><span style="color:#5b8fd0;font-weight:normal;font-style:normal;">... View</span></div>
<svg style="position:absolute;left:8px;top:66.5px;" width="6" height="10" viewBox="0 0 6 10"><path d="M0.7 0.7 L5 5 L0.7 9.3" stroke="#9a9c9e" stroke-width="1.3" fill="none"/></svg>
<svg style="position:absolute;left:27px;top:66.0px;" width="11" height="11" viewBox="0 0 11 11"><rect x="0" y="0" width="11" height="2.4" fill="#c9a13e"/><rect x="0" y="4.3" width="11" height="2.4" fill="#c9a13e"/><rect x="0" y="8.6" width="11" height="2.4" fill="#c9a13e"/></svg>
<div style="left:43.50px;top:61.50px;white-space:pre;will-change:transform;font-family:'Liberation Sans', sans-serif;font-size:13px;line-height:20px;-webkit-text-stroke-width:0.15px;"><span style="color:#f5a09e;font-weight:normal;font-style:normal;">definition</span><span style="color:#bbbbbb;font-weight:normal;font-style:normal;"> = </span><span style="color:#8e9092;font-weight:normal;font-style:normal;">{ScannedGenericBeanDefinition@6384}</span><span style="color:#dadada;font-weight:normal;font-style:normal;"> "Gene</span><span style="color:#5b8fd0;font-weight:normal;font-style:normal;">... View</span></div>
<svg style="position:absolute;left:8px;top:86.5px;" width="6" height="10" viewBox="0 0 6 10"><path d="M0.7 0.7 L5 5 L0.7 9.3" stroke="#9a9c9e" stroke-width="1.3" fill="none"/></svg>
<svg style="position:absolute;left:27px;top:86.0px;" width="11" height="11" viewBox="0 0 11 11"><rect x="0" y="0" width="11" height="2.4" fill="#c9a13e"/><rect x="0" y="4.3" width="11" height="2.4" fill="#c9a13e"/><rect x="0" y="8.6" width="11" height="2.4" fill="#c9a13e"/></svg>
<div style="left:43.50px;top:81.50px;white-space:pre;will-change:transform;font-family:'Liberation Sans', sans-serif;font-size:13px;line-height:20px;-webkit-text-stroke-width:0.15px;"><span style="color:#f5a09e;font-weight:normal;font-style:normal;">beanClassName</span><span style="color:#bbbbbb;font-weight:normal;font-style:normal;"> = </span><span style="color:#6f9f5c;font-weight:normal;font-style:normal;">"com.iris.egrant.app.wechat.mapper.WechatMapper"</span></div>
<svg style="position:absolute;left:24px;top:107.5px;" width="17" height="8" viewBox="0 0 17 8"><circle cx="4" cy="4" r="3.2" fill="none" stroke="#a9bcc9" stroke-width="1.5"/><circle cx="13" cy="4" r="3.2" fill="none" stroke="#a9bcc9" stroke-width="1.5"/><path d="M7.2 3.5 H9.8" stroke="#a9bcc9" stroke-width="1.4"/></svg>
<div style="left:43.50px;top:101.50px;white-space:pre;will-change:transform;font-family:'Liberation Sans', sans-serif;font-size:13px;line-height:20px;-webkit-text-stroke-width:0.15px;letter-spacing:0.110px;"><span style="color:#f5a09e;font-weight:normal;font-style:normal;">this.addToConfig</span><span style="color:#bbbbbb;font-weight:normal;font-style:normal;"> = </span><span style="color:#dadada;font-weight:normal;font-style:normal;">true</span></div>
<svg style="position:absolute;left:8px;top:126.5px;" width="6" height="10" viewBox="0 0 6 10"><path d="M0.7 0.7 L5 5 L0.7 9.3" stroke="#9a9c9e" stroke-width="1.3" fill="none"/></svg>
<svg style="position:absolute;left:24px;top:127.5px;" width="17" height="8" viewBox="0 0 17 8"><circle cx="4" cy="4" r="3.2" fill="none" stroke="#a9bcc9" stroke-width="1.5"/><circle cx="13" cy="4" r="3.2" fill="none" stroke="#a9bcc9" stroke-width="1.5"/><path d="M7.2 3.5 H9.8" stroke="#a9bcc9" stroke-width="1.4"/></svg>
<div style="left:43.50px;top:121.50px;white-space:pre;will-change:transform;font-family:'Liberation Sans', sans-serif;font-size:13px;line-height:20px;-webkit-text-stroke-width:0.15px;letter-spacing:-0.078px;"><span style="color:#f5a09e;font-weight:normal;font-style:normal;">this.sqlSessionFactoryBeanName</span><span style="color:#bbbbbb;font-weight:normal;font-style:normal;"> = </span><span style="color:#dadada;font-weight:normal;font-style:normal;">""</span></div>
</div>
<div style="left:1636px;top:543px;width:16px;height:24px;background:#4e5254;"></div>
<div style="left:1652px;top:543px;width:1px;height:445px;background:#37393b;"></div>
<svg style="position:absolute;left:1637px;top:572px;" width="15" height="15" viewBox="0 0 15 15"><rect x="0.5" y="0.5" width="14" height="14" rx="2" fill="#43494a" stroke="#6b6b6b"/><path d="M3.5 7.5 L6.5 10.5 L11.5 4" stroke="#d0d0d0" stroke-width="1.5" fill="none"/></svg>
<div style="left:1636px;top:568px;width:19px;height:1px;background:#2f3133;"></div>
<svg style="position:absolute;left:1637px;top:596px;" width="15" height="15" viewBox="0 0 15 15"><rect x="0.5" y="0.5" width="14" height="14" rx="2" fill="#43494a" stroke="#6b6b6b"/><path d="M3.5 7.5 L6.5 10.5 L11.5 4" stroke="#d0d0d0" stroke-width="1.5" fill="none"/></svg>
<div style="left:1636px;top:592px;width:19px;height:1px;background:#2f3133;"></div>
<svg style="position:absolute;left:1637px;top:620px;" width="15" height="15" viewBox="0 0 15 15"><rect x="0.5" y="0.5" width="14" height="14" rx="2" fill="#43494a" stroke="#6b6b6b"/><path d="M3.5 7.5 L6.5 10.5 L11.5 4" stroke="#d0d0d0" stroke-width="1.5" fill="none"/></svg>
<div style="left:1636px;top:616px;width:19px;height:1px;background:#2f3133;"></div>
<svg style="position:absolute;left:1637px;top:644px;" width="15" height="15" viewBox="0 0 15 15"><rect x="0.5" y="0.5" width="14" height="14" rx="2" fill="#43494a" stroke="#6b6b6b"/><path d="M3.5 7.5 L6.5 10.5 L11.5 4" stroke="#d0d0d0" stroke-width="1.5" fill="none"/></svg>
<div style="left:1636px;top:640px;width:19px;height:1px;background:#2f3133;"></div>
<svg style="position:absolute;left:1637px;top:668px;" width="15" height="15" viewBox="0 0 15 15"><rect x="0.5" y="0.5" width="14" height="14" rx="2" fill="#43494a" stroke="#6b6b6b"/><path d="M3.5 7.5 L6.5 10.5 L11.5 4" stroke="#d0d0d0" stroke-width="1.5" fill="none"/></svg>
<div style="left:1636px;top:664px;width:19px;height:1px;background:#2f3133;"></div>
</body></html>
